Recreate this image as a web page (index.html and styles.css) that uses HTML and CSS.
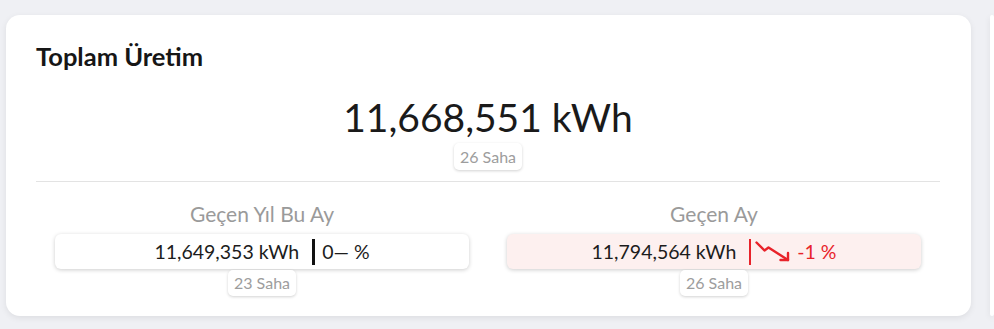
FILE: index.html
```html
<!DOCTYPE html>
<html lang="tr">
<head>
	<meta charset="UTF-8">
	<title>Toplam Üretim</title>
	<link rel="stylesheet" href="styles.css">
</head>
<body>
	<div class="board">
		<section class="card">
			<h2 class="card-title">Toplam Üretim</h2>

			<div class="total">
				<div class="total-value">11,668,551 kWh</div>
				<span class="badge">26 Saha</span>
			</div>

			<hr class="line">

			<div class="compare">
				<div class="compare-item">
					<div class="compare-label">Geçen Yıl Bu Ay</div>
					<div class="compare-box">
						<span class="compare-num">11,649,353 kWh</span>
						<i class="bar"></i>
						<span class="compare-rate">0— %</span>
					</div>
					<span class="badge">23 Saha</span>
				</div>

				<div class="compare-item">
					<div class="compare-label">Geçen Ay</div>
					<div class="compare-box is-down">
						<span class="compare-num">11,794,564 kWh</span>
						<i class="bar"></i>
						<svg class="trend" width="35" height="21" viewBox="0 0 35 21" fill="none" stroke="currentColor" stroke-width="2.4" stroke-linecap="round" stroke-linejoin="round">
							<polyline points="1.5,1.5 9.5,9.5 13.5,6.5 33,19"/>
							<polyline points="25.5,19 33,19 33,12"/>
						</svg>
						<span class="compare-rate">-1 %</span>
					</div>
					<span class="badge">26 Saha</span>
				</div>
			</div>
		</section>

		<section class="card card-next"></section>
	</div>
</body>
</html>
```

FILE: styles.css
```css
html, body {
	height: 100%;
}

body {
	margin: 0;
	background: #eff0f4;
	font-family: Lato, "Noto Sans", sans-serif;
	color: #1c1c1c;
	overflow: hidden;
}

.board {
	display: flex;
	gap: 19px;
	padding: 15px 0 0 6px;
}

.card {
	flex: 0 0 965px;
	height: 301px;
	box-sizing: border-box;
	padding: 26px 31px 0 30px;
	background: #fff;
	border-radius: 14px;
	box-shadow: 0 2px 6px rgba(0, 0, 0, .08);
}

.card-next {
	flex: 1 1 auto;
	min-width: 0;
	padding: 0;
}

.card-title {
	margin: 0;
	font-size: 25.5px;
	font-weight: 700;
	line-height: 30px;
	color: #161616;
}

.total {
	display: flex;
	flex-direction: column;
	align-items: center;
	margin-top: 23px;
}

.total-value {
	font-size: 39px;
	line-height: 47px;
	font-weight: 400;
	color: #1a1a1a;
}

.badge {
	display: inline-block;
	margin-top: 2px;
	padding: 3px 6px;
	font-size: 16px;
	line-height: 21px;
	color: #9d9d9d;
	background: #fff;
	border-radius: 5px;
	box-shadow: 0 1px 3px rgba(0, 0, 0, .18);
}

.line {
	margin: 11px 0 0;
	border: 0;
	border-top: 1px solid #e3e3e3;
}

.compare {
	display: grid;
	grid-template-columns: 1fr 1fr;
}

.compare-item {
	display: flex;
	flex-direction: column;
	align-items: center;
	padding: 0 19px;
}

.compare-item .badge {
	margin-top: 1px;
	line-height: 20px;
}

.compare-label {
	margin-top: 19px;
	font-size: 21px;
	line-height: 25px;
	color: #9a9a9a;
}

.compare-box {
	display: flex;
	justify-content: center;
	align-items: center;
	align-self: stretch;
	height: 35px;
	margin-top: 8px;
	font-size: 19.5px;
	background: #fff;
	border-radius: 6px;
	box-shadow: 0 1px 4px rgba(0, 0, 0, .2);
}

.bar {
	width: 3px;
	height: 26px;
	margin: 0 7px 0 13px;
	background: #111;
}

.trend {
	margin-right: 7px;
}

.compare-box.is-down {
	background: #fdf0ef;
}

.is-down .bar {
	width: 2px;
	margin-right: 4px;
	background: #e8232a;
}

.is-down .trend,
.is-down .compare-rate {
	color: #e8232a;
}
```
